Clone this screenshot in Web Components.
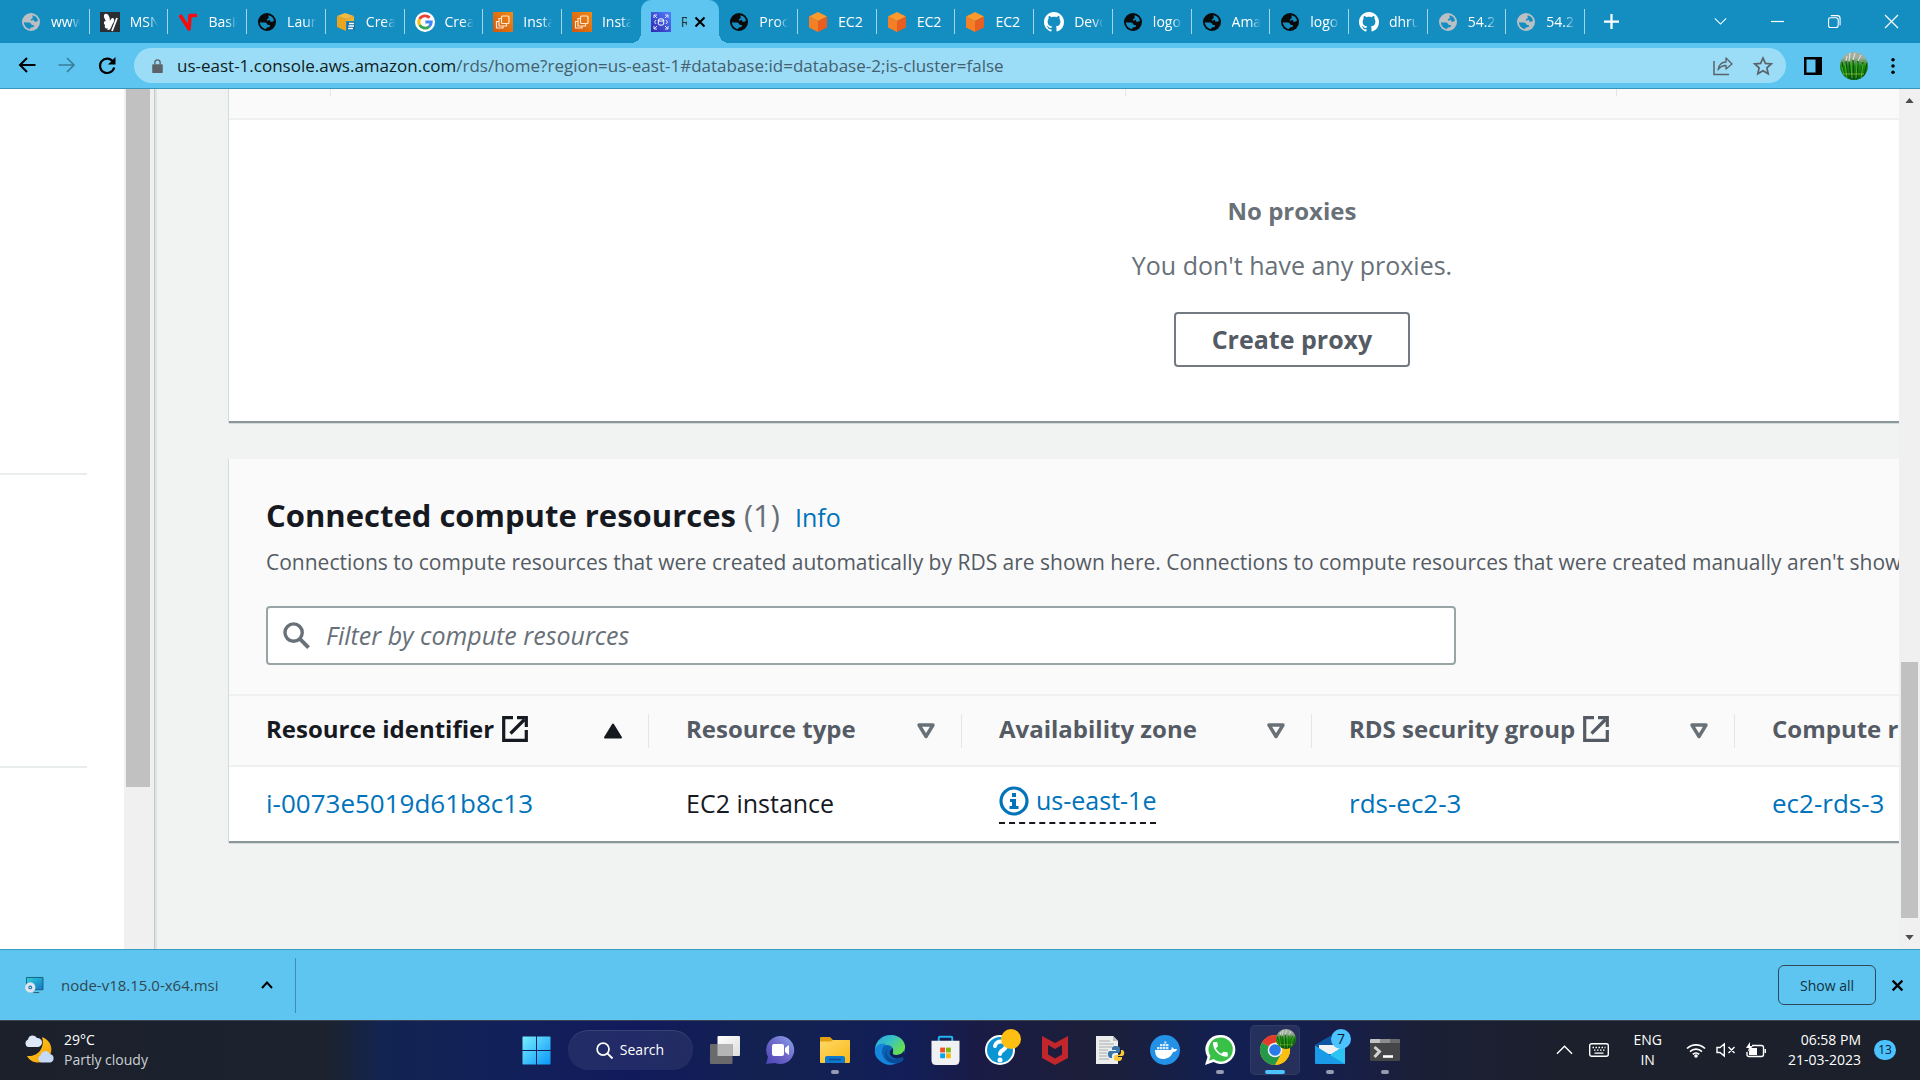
<!DOCTYPE html>
<html lang="en">
<head>
<meta charset="utf-8">
<title>RDS Management Console</title>
<style>
html,body{margin:0;height:100%;overflow:hidden}
body{font-family:"Open Sans","Noto Sans",sans-serif;background:#f1f3f3}
</style>
</head>
<body>
<desktop-shell></desktop-shell>
<script>
const define = (name, css, html) => {
  const t = document.createElement('template');
  t.innerHTML = `<style>*{box-sizing:border-box}button{font:inherit;color:inherit;background:none;border:0;padding:0;margin:0}a{text-decoration:none}${css}</style>${html}`;
  customElements.define(name, class extends HTMLElement {
    constructor() {
      super();
      this.attachShadow({mode: 'open'}).append(t.content.cloneNode(true));
    }
  });
};

const GITHUB = 'M8 0C3.580 0 0 3.580 0 8c0 3.540 2.290 6.530 5.470 7.590.4.070.55-.17.55-.38 0-.19-.01-.82-.01-1.490-2.010.37-2.530-.49-2.690-.94-.09-.23-.48-.94-.82-1.130-.28-.15-.68-.52-.01-.53.63-.01 1.080.58 1.230.82.72 1.210 1.870.87 2.330.66.070-.52.28-.87.51-1.070-1.780-.2-3.640-.89-3.640-3.950 0-.87.31-1.590.82-2.150-.08-.2-.36-1.020.08-2.120 0 0 .67-.21 2.200.82.64-.18 1.320-.27 2-.27s1.360.09 2 .27c1.530-1.040 2.200-.82 2.200-.82.44 1.100.16 1.920.08 2.120.51.56.82 1.270.82 2.150 0 3.070-1.870 3.750-3.650 3.950.29.25.54.73.54 1.480 0 1.070-.01 1.930-.01 2.200 0 .21.15.46.55.38A8.010 8.010 0 0 0 16 8c0-4.420-3.580-8-8-8z';
const PHONE = 'M6.620 10.790c1.440 2.830 3.760 5.140 6.590 6.590l2.200-2.200c.27-.27.67-.36 1.020-.24 1.120.37 2.330.57 3.570.57.55 0 1 .45 1 1V20c0 .55-.45 1-1 1-9.390 0-17-7.610-17-17 0-.55.45-1 1-1h3.500c.55 0 1 .45 1 1 0 1.250.2 2.450.57 3.570.11.35.03.74-.25 1.020l-2.200 2.200z';
const s = (box, body) => `<svg viewBox="0 0 ${box}" aria-hidden="true">${body}</svg>`;
const line = (d, w, extra = '') => `<path d="${d}" fill="none" stroke="currentColor" stroke-width="${w}" ${extra}/>`;

const ICONS = {
  globe: s('20 20', `<circle cx="10" cy="10" r="9" fill="currentColor"/><path fill="#148dc1" d="M11.500 3.200c3 .5 5 2.600 5.500 5.600-1.200.9-2.600 1.400-3.800.7l-.2-1.800-2 .9c-1 .3-1.600-.5-.9-1.300l1.600-1.100zM3 10.300c2 .4 4.600-.3 6 .5 1 .7 1 2 2.200 2.200l2 .3-.7 1.700-2.700.4-.8 1.600C5.600 16.500 3 13.800 3 10.300z"/>`),
  msn: s('20 20', `<path d="M0 0h20v20H0z" fill="#2b2e33"/><path d="M5 2c3-1 5 3 5 7 1-3 3-4 4-2 1 2-1 4-2 6-1 3-2 5-4 5-1 0-1-1 0-2-2 1-4 0-3-3C3 11 4 9 6 9 4 6 3 3 5 2z" fill="#fff"/><path d="m17 6-5 13" stroke="#fff" stroke-width="1.800"/>`),
  vee: s('20 20', `<path d="m2 3 9 14 1-13.500h7" fill="none" stroke="#f90a0c" stroke-width="3.600" stroke-linejoin="round"/>`),
  boxes: s('20 20', `<path d="m1 4 8-3 9 3-8 3z" fill="#f6b940"/><path d="M1 4v11l9 4V7z" fill="#e9a51e"/><path d="m10 7 8-3v5h-8z" fill="#f3ae2c"/><path d="M11 10h8v8h-8z" fill="#1d6fa6"/><path d="M13 11.500h5M12.500 14H18m-6 2.500h5" stroke="#fff" stroke-width="1.500"/>`),
  google: s('48 48', `<circle cx="24" cy="24" r="24" fill="#fff"/><g fill="none" stroke-width="7"><path d="M35 14A15 15 0 0 0 11 17" stroke="#ea4335"/><path d="M11 17a15 15 0 0 0 0 14" stroke="#fbbc05"/><path d="M11 31a15 15 0 0 0 23 4" stroke="#34a853"/><path d="M34 35a15 15 0 0 0 5-11H25" stroke="#4285f4"/></g>`),
  instance: s('20 20', `<defs><linearGradient id="g" x1="0" y1="1" x2="1" y2="0"><stop stop-color="#d0570e"/><stop offset="1" stop-color="#f08a16"/></linearGradient></defs><path d="M0 0h20v20H0z" fill="url(#g)"/><rect x="8.500" y="4" width="7.500" height="7.500" rx="1" fill="none" stroke="#ffe8cf" stroke-width="1.200"/><path d="M8.500 6.500H6v7.500h7.500v-2.500M6 9.500H3.500V16H10v-2" fill="none" stroke="#ffe8cf" stroke-width="1.200"/>`),
  rds: s('20 20', `<defs><linearGradient id="g" x1="0" y1="1" x2="1" y2="0"><stop stop-color="#2e27ad"/><stop offset="1" stop-color="#527fff"/></linearGradient></defs><path d="M0 0h20v20H0z" fill="url(#g)"/><path d="M3 6V3h3M14 3h3v3M17 14v3h-3M6 17H3v-3M3 3l3 3M17 3l-3 3M17 17l-3-3M3 17l3-3M5 8l-1.500 2L5 12M15 8l1.500 2-1.500 2" fill="none" stroke="#dfe3ff"/><ellipse cx="10" cy="8" rx="2.700" ry="1.200" fill="none" stroke="#fff"/><path d="M7.300 8v4c0 1.600 5.400 1.600 5.400 0V8" fill="none" stroke="#fff"/>`),
  cube: s('20 20', `<path d="m10 0 9 4.500-9 4.500-9-4.500z" fill="#fd9a2b"/><path d="M1 4.500 10 9v11l-9-4.500z" fill="#f47f24"/><path d="M19 4.500 10 9v11l9-4.500z" fill="#e85e20"/>`),
  github: s('16 16', `<path fill="#fff" d="${GITHUB}"/>`),
  x: s('12 12', line('m1.500 1.500 9 9m0-9-9 9', 2)),
  thinx: s('14 14', line('m0 0 14 14M14 0 0 14', 1.300)),
  plus: s('16 16', line('M8 0v16M0 8h16', 2.400)),
  down: s('14 8', line('m.5.5 6.500 6.500L13.500.5', 1.200)),
  min: s('14 14', line('M0 7h14', 1.300)),
  restore: s('14 14', line('M2.500 3h6q2.500 0 2.500 2.500V11q0 2.500-2.500 2.500h-6Q.6 13.500.6 11V5q0-2 1.900-2z', 1.200) + line('M3 .7h7q3 0 3 3V11', 1.200)),
  back: s('18 16', line('M17.500 8H2m7-7L2 8l7 7', 2)),
  forward: s('18 16', line('M.5 8H16M9 1l7 7-7 7', 1.600)),
  reload: s('18 18', line('M15 4.500A7.200 7.200 0 1 0 16.200 10.500', 2.200) + '<path d="M17.500 0v7.500H10z" fill="currentColor"/>'),
  lock: s('12 16', `<path d="M1 6h10q1 0 1 1v8q0 1-1 1H1q-1 0-1-1V7q0-1 1-1z" fill="currentColor"/>${line('M3 6V4a3 3 0 0 1 6 0v2', 1.500)}`),
  share: s('20 20', line('M1 5v13.500h15', 1.500) + line('M5 14c1-6 4-8 8-8V2l6 6-6 5V9.500c-4 0-6 1-8 4.500z', 1.300, 'stroke-linejoin="round"')),
  star: s('20 20', line('m10 2 2.400 5.400 5.900.6-4.400 3.900 1.300 5.800L10 14.700l-5.200 3 1.300-5.800L1.700 8l5.900-.6z', 1.700)),
  panel: s('18 18', '<path d="M0 0h18v18H0zm2.500 2.500v13h9v-13z" fill="currentColor" fill-rule="evenodd"/>'),
  dots: s('4 18', '<circle cx="2" cy="2" r="2"/><circle cx="2" cy="9" r="2"/><circle cx="2" cy="16" r="2"/>'),
  avatar: s('28 28', `<defs><clipPath id="c"><circle cx="14" cy="14" r="14"/></clipPath><linearGradient id="g" x1="0" y1="0" x2="0" y2="1"><stop offset=".2" stop-color="#a3ada0"/><stop offset=".5" stop-color="#1c8a15"/><stop offset="1" stop-color="#0d5c0a"/></linearGradient></defs><g clip-path="url(#c)"><path d="M0 0h28v28H0z" fill="url(#g)"/><path d="M5 28 2 10m6 18L6 9m5 19L9 10m5 18L13 8m4 20L18 9m2 19 3-18m0 18 4-17" stroke="#0b4d0a"/><path d="m7 26-2-14m7 14-1-16m5 16 1-15m4 15 2-14M4 24l-2-9" stroke="#43b427"/><path d="M4 22h20" stroke="#b9d84a" opacity=".6"/><path d="m9 9 1-8m3 7 2-7m3 8 3-6M6 9l1-5" stroke="#e6eae3"/></g>`),
  search: s('28 28', line('m17.500 17.500 9 9', 4) + '<circle cx="11" cy="11" r="9" fill="none" stroke="currentColor" stroke-width="3.500"/>'),
  thinsearch: s('18 18', line('m11.500 11.500 6 6', 2) + '<circle cx="7.500" cy="7.500" r="6.300" fill="none" stroke="currentColor" stroke-width="1.800"/>'),
  external: s('26 26', line('M11 1.700H1.700v22.600h22.600V14', 3.200) + line('m8.500 17.500 14-14', 3.200) + line('M15 1.700h9.300V11', 3.200)),
  asc: s('18 16', '<path d="M9 1.500 17 14.500H1z" fill="currentColor" stroke="currentColor" stroke-width="2" stroke-linejoin="round"/>'),
  desc: s('18 16', '<path d="M9 13.500 2 2h14z" fill="none" stroke="currentColor" stroke-width="3.400" stroke-linejoin="round"/>'),
  info: s('30 30', '<circle cx="15" cy="15" r="13" fill="none" stroke="currentColor" stroke-width="3.200"/><path d="M13 7h4v4h-4zM11 13h6v7h2.500v3h-9v-3H13v-4h-2z" fill="currentColor"/>'),
  msi: s('20 18', `<defs><linearGradient id="g" x1="0" y1="0" x2="1" y2="1"><stop stop-color="#2bd3d6"/><stop offset="1" stop-color="#1673c8"/></linearGradient></defs><path d="M1.500.5h17.500v13H1.500z" fill="url(#g)" stroke="#17607c"/><path d="M9 16.500h6" stroke="#35525e"/><circle cx="5.500" cy="11" r="5.500" fill="#dfe5ea"/><circle cx="5.500" cy="11" r="2" fill="#1a76b8"/><circle cx="5.500" cy="11" r=".8" fill="#fff"/>`),
  up: s('12 8', line('M1 7l5-5.500L11 7', 2)),
  thinup: s('18 10', line('m1 9 8-8 8 8', 1.500)),
  weather: s('30 30', `<defs><linearGradient id="g" x1="0" y1="0" x2="1" y2="1"><stop stop-color="#ffd21f"/><stop offset="1" stop-color="#f79a08"/></linearGradient></defs><path d="M18 2c9 3 12 13 7 20-5 7-17 8-22-1 12 1 18-9 15-19z" fill="url(#g)"/><g fill="#dce8f8"><path d="M4 12a4 4 0 0 1 0-7.500A4.800 4.800 0 0 1 13 3a4.500 4.500 0 0 1 1 9z"/><path d="M17 27.500a3.800 3.800 0 0 1-.4-7.200 4.800 4.800 0 0 1 9.200-1.200 4.300 4.300 0 0 1 .7 8.400z" fill="#c6daf5"/></g>`),
  start: s('30 30', `<defs><linearGradient id="g" x1="0" y1="0" x2="1" y2="1" ><stop stop-color="#78eefe"/><stop offset="1" stop-color="#0a96f8"/></linearGradient></defs><path d="M1 .5h13.500v14H.5V1zM15.500.5H29l.5.5v13.500h-14zM.5 15.500h14v14H1l-.5-.5zM15.500 15.500h14V29l-.5.5H15.500z" fill="url(#g)"/>`),
  taskview: s('30 28', `<defs><linearGradient id="g" x1="0" y1="0" x2="1" y2="1"><stop stop-color="#fff"/><stop offset="1" stop-color="#ddd"/></linearGradient></defs><rect x="7.500" width="22.500" height="20" rx="1" fill="url(#g)"/><rect y="8" width="22.500" height="20" rx="1" fill="#6a6a6c"/><path d="M7.500 8h15v12h-15z" fill="#b5b5b6"/>`),
  meet: s('30 30', `<defs><linearGradient id="g" x1="0" y1="1" x2="1" y2="0"><stop stop-color="#4b45b4"/><stop offset=".5" stop-color="#6f67c9"/><stop offset="1" stop-color="#8aa5ec"/></linearGradient></defs><path d="M15 1a14 14 0 1 1-5 27l-9 1 2-7A14 14 0 0 1 15 1z" fill="url(#g)"/><rect x="7" y="9" width="12" height="12" rx="2" fill="#fff"/><path d="m20 13 4-3v10l-4-3z" fill="#fff"/>`),
  folder: s('30 28', `<defs><linearGradient id="g" x1="0" y1="0" x2="1" y2="1"><stop stop-color="#ffd866"/><stop offset="1" stop-color="#f9b817"/></linearGradient></defs><path d="M0 2q0-1 1-1h9l3 3h16q1 0 1 1v4H0z" fill="#e0a011"/><path d="M0 5.500h11l2-1.500h16q1 0 1 1v21q0 1-1 1H1q-1 0-1-1z" fill="url(#g)"/><path d="M5 27v-5q0-2 2-2h16q2 0 2 2v5z" fill="#0f78cf"/><path d="M9 23.500h12" stroke="#0a4f93" stroke-width="1.500"/>`),
  edge: s('30 30', `<defs><linearGradient id="g" x1="0" y1="0" x2="1" y2=".6"><stop stop-color="#2aa3e6"/><stop offset=".5" stop-color="#37c2c4"/><stop offset="1" stop-color="#6be04a"/></linearGradient></defs><circle cx="15" cy="15" r="15" fill="#0b63b5"/><path d="M0 14C1 5 8 0 16 0c9 0 15 7 14 13-1 5-5 7-9 7-3 0-4-1-3-3 1-4-2-7-6-7-6 0-12 5-12 9z" fill="url(#g)"/><path d="M0 14c2-5 7-6 11-5-5 3-5 10-2 14 3 5 9 6 13 5-4 2-10 3-15-1C2 24-1 20 0 14z" fill="#1487dc"/><path d="M13 14c-4 6 2 13 14 9l2 1c-1 2-3 3-5 4-7 2-14-3-14-8 0-3 1-5 3-6z" fill="#0a4c99"/><path d="M18 17c-1 2 0 3 3 3s6-1 8-4l2 7-3-1c-8 4-15-1-13-6l3-3z" fill="#121f56"/>`),
  store: s('30 30', `<path d="M8 6V2q0-1.300 1.300-1.300h11.400Q22 .7 22 2v4" fill="none" stroke="#22b4ee" stroke-width="2"/><path d="M.5 5h29v20q0 5-5 5h-19q-5 0-5-5z" fill="#f0f1f2"/><path d="M9.500 12h5v5h-5z" fill="#f04e23"/><path d="M15.500 12h5v5h-5z" fill="#7fb90b"/><path d="M9.500 18h5v5h-5z" fill="#04a4ee"/><path d="M15.500 18h5v5h-5z" fill="#fdb80c"/>`),
  help: s('30 30', `<circle cx="15" cy="15" r="14" fill="#0c95d3" stroke="#fff" stroke-width="2"/><path d="M10 11c1-6 11-6 11 0 0 4-6 4-6 8" fill="none" stroke="#fff" stroke-width="4" stroke-linecap="round"/><circle cx="15" cy="25" r="2.500" fill="#fff"/>`),
  mcafee: s('28 30', `<path d="M1 1 14 8l13-7v22l-13 7L1 23z" fill="#c2262d"/><path d="M7 10v9.500l7 4 7-4V10l-7 4z" fill="#1c1d3c"/>`),
  python: s('28 28', `<path d="M0 0h17l5 5v23H0z" fill="#eceded"/><path d="M17 0v5h5" fill="#bbb"/><path d="M3 5h11M3 8h15M3 11h13M3 14h9M3 17h8M3 20h8M3 23h10" stroke="#a8aaad"/><path d="M20 10c-4 0-4 1-4 4h4v1h-6c-3 0-3 7 1 7h1v-2q0-3 3-3h3q2 0 2-2v-2c0-2-1-3-4-3z" fill="#3a76a8"/><path d="M22 25c4 0 4-2 4-4h-4v-1h4c3 0 3-6 0-6h-1v2q0 3-3 3h-2q-2 0-2 2v2c0 1 1 2 4 2z" fill="#fcca36"/>`),
  docker: s('30 30', `<circle cx="15" cy="15" r="15" fill="#2391e6"/><path d="M5 15h16c1-1 0-2 1-3l2 2h3c0 2-2 3-4 3-2 5-6 7-10 7-5 0-8-3-8-9z" fill="#fff"/><path d="M7 12h2.500v2.300H7zm3 0h2.500v2.300H10zm3 0h2.500v2.300H13zm3 0h2.500v2.300H16zm-6-3h2.500v2.300H10zm3 0h2.500v2.300H13zm3 0h2.500v2.300H16z" fill="#d9ecfb"/><path d="M14.300 6.500h2v2h-2z" fill="#d9ecfb"/>`),
  whatsapp: s('30 30', `<path d="M15.500 0a14.500 14.500 0 1 1-7 27L0 30l2.500-8A14.500 14.500 0 0 1 15.500 0z" fill="#fff"/><path d="M15.500 2.500a12 12 0 1 1-7 21.500l-4.500 1.700 1.500-4.700A12 12 0 0 1 15.500 2.500z" fill="#38c047"/><path transform="translate(5.500 4.500) scale(.82)" fill="#fff" d="${PHONE}"/>`),
  chrome: s('30 30', `<circle cx="15" cy="15" r="15" fill="#fbbf12"/><path d="M15 15 2 7.500A15 15 0 0 1 28 7.500H15z" fill="#e23b2e"/><path d="M2 7.500A15 15 0 0 0 15 30l6.500-11.300L15 15z" fill="#25984a"/><path d="M28 7.500H15V15l6.500 3.700L15 30A15 15 0 0 0 28 7.500z" fill="#fbbf12"/><circle cx="15" cy="15" r="7.300" fill="#f1f3f4"/><circle cx="15" cy="15" r="5.800" fill="#2b7ae9"/>`),
  mail: s('30 28', `<path d="M0 9 15 0l15 9v18H0z" fill="#0c55a5"/><path d="M4 9h22v9H4z" fill="#eef2f5"/><path d="M0 9.500 15 19l15-9.500V27q0 1-1 1H1q-1 0-1-1z" fill="#1a9be8"/><path d="M30 9.500V28L15 19z" fill="#2cc4f2"/>`),
  terminal: s('30 22', `<rect width="30" height="22" rx="1.500" fill="#454648"/><path d="M0 1q0-1 1-1h9v4H0z" fill="#c3c3c5"/><path d="M10 0h10v4H10z" fill="#8d8d90"/><path d="M20 0h9q1 0 1 1v3H20z" fill="#6a6a6d"/><path d="m4.500 8 5 4.500-5 5.500" fill="none" stroke="#d2d2d3" stroke-width="3"/><path d="M13 17.500h10" stroke="#fff" stroke-width="2.600"/>`),
  keyboard: s('20 14', `<rect x=".7" y=".7" width="18.600" height="12.600" rx="2" fill="none" stroke="currentColor" stroke-width="1.400"/><path d="M3.500 4.500h1.500m1.500 0H8m1.500 0H11m1.500 0H14m1.500 0h1M5 7.200h1.500m1.500 0h1.500m1.500 0h1.500M14 7.200h1.500M5.500 10.200h9" stroke="currentColor" stroke-width="1.300"/>`),
  wifi: s('20 15', line('M1 5.500a13 13 0 0 1 18 0M4 8.600a8.600 8.600 0 0 1 12 0M6.800 11.400a4.600 4.600 0 0 1 6.400 0', 1.600) + '<circle cx="10" cy="13" r="1.800" fill="currentColor"/>'),
  mute: s('20 14', line('M1 4.500h3L8.300 1v12L4 9.500H1zM12.500 4l6 6m0-6-6 6', 1.400)),
  battery: s('20 16', line('M6 3.500h9.500q2 0 2 2v7q0 2-2 2H3q-2 0-2-2V10', 1.400) + '<path d="M18.500 7h1.500v4h-1.500zM5 6h6v7H3V9zM4 0 0 6h3L1.500 10 7 4H4z" fill="currentColor"/>'),
  tri: s('10 6', '<path d="M5 0 10 6H0z" fill="#4d4d4d"/>'),
  trid: s('10 6', '<path d="M5 6 10 0H0z" fill="#4d4d4d"/>')
};

customElements.define('ui-icon', class extends HTMLElement {
  constructor() { super(); this.attachShadow({mode: 'open'}); }
  connectedCallback() {
    this.shadowRoot.innerHTML = `<style>:host{display:inline-block;flex:none;width:var(--w,20px);height:var(--h,var(--w,20px))}svg{display:block;width:100%;height:100%;overflow:visible}</style>${ICONS[this.getAttribute('name')]}`;
  }
});
const ic = (name, w, h = w, extra = '') => `<ui-icon name="${name}" style="--w:${w}px;--h:${h}px;${extra}"></ui-icon>`;

define('browser-tab', `
:host{display:flex;flex:1 1 0;min-width:0;height:43px;align-items:center}
button{display:flex;align-items:center;gap:10px;width:100%;height:25px;padding:0 7px 0 10px;border-right:1px solid #a5d5ea;color:#fff;text-align:left}
.t{flex:1;min-width:0;overflow:hidden;white-space:nowrap;font-size:14px;line-height:20px;-webkit-mask-image:linear-gradient(90deg,#000 60%,transparent 95%)}
:host([whole]) .t{-webkit-mask-image:none}
:host([active]){background:#5ec5f0;border-radius:10px 10px 0 0;position:relative}
:host([active])::before,:host([active])::after{content:"";position:absolute;bottom:0;width:10px;height:10px}
:host([active])::before{right:100%;background:radial-gradient(circle at 0 0,transparent 10px,#5ec5f0 10px)}
:host([active])::after{left:100%;background:radial-gradient(circle at 100% 0,transparent 10px,#5ec5f0 10px)}
:host([active]) button,:host([last-before]) button{border-color:transparent}
:host([active]) button{color:#17333f;padding-right:13px}
:host([active]) .t{-webkit-mask-image:none;flex:0 0 6px;margin-right:-3px}
`, `<button role="tab"><slot name="icon"></slot><span class="t"><slot></slot></span><slot name="close"></slot></button>`);

const tab = (icon, text, attr = '', color = '#0a0a0a') => `<browser-tab ${attr}><ui-icon slot="icon" name="${icon}" style="color:${color}"></ui-icon>${text}${attr === 'active' ? '<ui-icon slot="close" name="x" style="--w:12px;color:#000"></ui-icon>' : ''}</browser-tab>`;

define('tab-strip', `
:host{display:flex;height:43px;background:#148dc1;color:#fff;padding-left:11px;align-items:center}
.tabs{display:flex;flex:0 1 1574px;min-width:0}
.new{margin-left:19px;display:flex}
.win{margin-left:auto;display:flex;height:36px}
.win button{width:57px;display:flex;align-items:center;justify-content:center}
`, `<div class="tabs" role="tablist">
${tab('globe', 'www', '', '#b9bfc3')}${tab('msn', 'MSN')}${tab('vee', 'Basic')}${tab('globe', 'Laun')}${tab('boxes', 'Crea')}${tab('google', 'Crea')}${tab('instance', 'Insta')}${tab('instance', 'Insta', 'last-before')}${tab('rds', 'R', 'active')}${tab('globe', 'Proc')}${tab('cube', 'EC2', 'whole')}${tab('cube', 'EC2', 'whole')}${tab('cube', 'EC2', 'whole')}${tab('github', 'Devo')}${tab('globe', 'logo')}${tab('globe', 'Ama')}${tab('globe', 'logo')}${tab('github', 'dhru')}${tab('globe', '54.2', '', '#b9bfc3')}${tab('globe', '54.2', '', '#b9bfc3')}
</div><button class="new" aria-label="New tab">${ic('plus', 15)}</button>
<div class="win"><button aria-label="Search tabs">${ic('down', 13, 7)}</button><button aria-label="Minimize">${ic('min', 13)}</button><button aria-label="Restore">${ic('restore', 13)}</button><button aria-label="Close">${ic('thinx', 13)}</button></div>`);

define('tool-bar', `
:host{display:flex;align-items:center;height:46px;background:#5ec5f0;border-bottom:1px solid #3595bd;padding:0 25px 0 18px}
button{display:flex}
.nav{display:flex;gap:22px;margin-right:18px}
.omni{flex:1;min-width:0;display:flex;align-items:center;height:35px;border-radius:18px;background:#9bdcf7;padding:0 13px 0 18px;margin-right:18px;color:#5b6268}
.url{flex:1;min-width:0;margin-left:14px;font-size:17px;line-height:24px;white-space:nowrap;color:#43606d;outline:0}
.url b{font-weight:400;color:#0f1c22}
.acts{display:flex;gap:20px}
.right{display:flex;align-items:center;gap:18px}
`, `<div class="nav"><button aria-label="Back">${ic('back', 18, 16)}</button><button aria-label="Forward" style="color:#3a7c98">${ic('forward', 18, 16)}</button><button aria-label="Reload">${ic('reload', 18)}</button></div>
<div class="omni">${ic('lock', 11, 14)}<div class="url" role="textbox" aria-label="Address"><b>us-east-1.console.aws.amazon.com</b>/rds/home?region=us-east-1#database:id=database-2;is-cluster=false</div><div class="acts"><button aria-label="Share">${ic('share', 20)}</button><button aria-label="Bookmark">${ic('star', 20)}</button></div></div>
<div class="right"><button aria-label="Side panel">${ic('panel', 18)}</button><button aria-label="Profile">${ic('avatar', 28)}</button><button aria-label="Menu" style="padding-left:5px">${ic('dots', 4, 16)}</button></div>`);

define('side-pane', `
:host{display:flex;flex:none;width:157px;background:#fff;border-right:2px solid #dfe3e3}
.nav{flex:1;padding:384px 37px 0 0}
hr{border:0;height:2px;background:#eaeded;margin:0 0 291px}
.bar{width:31px;background:#f0f0f0;padding:0 4px 0 2px;border-right:1px solid #c3c8c8}
.thumb{height:698px;background:#c1c1c1}
`, `<nav class="nav"><hr><hr></nav><div class="bar"><div class="thumb"></div></div>`);

define('page-scroll', `
:host{display:flex;flex:none;flex-direction:column;align-items:center;width:21px;background:#f0f0f0;padding:9px 0}
.track{flex:1;width:17px;display:flex;flex-direction:column;justify-content:flex-end;padding:0 0 17px}
.thumb{height:256px;background:#c1c1c1}
`, `${ic('tri', 9, 5)}<div class="track"><div class="thumb"></div></div>${ic('trid', 9, 5)}`);

define('aws-card', `
:host{display:block;width:2126px;background:#fff;border-bottom:2px solid #8a9899;box-shadow:-1px 0 #d5dbdb,0 1px #d5dbdb}
.head{background:#fafafa}
`, `<div class="head"><slot name="head"></slot></div><slot></slot>`);

define('proxies-panel', `
:host{display:block}
.cols{display:grid;grid-template-columns:102px 795px 491px 1fr;height:31px;border-bottom:2px solid #eff0f0}
.cols i{height:7px;border-right:1px solid #e4e7e7}
.cols i:last-child{border:0}
.empty{padding:76px 0 54px;display:flex;flex-direction:column;align-items:center;color:#687078;font-size:24px;line-height:30px}
p{margin:24px 0 32px;font-size:25px}
button{height:55px;width:236px;padding-bottom:2px;border:2px solid #747a82;border-radius:4px;color:#545b64;font-weight:700;font-size:25px}
`, `<aws-card><div slot="head" class="cols"><i></i><i></i><i></i><i></i></div><div class="empty"><strong>No proxies</strong><p>You don't have any proxies.</p><button>Create proxy</button></div></aws-card>`);

define('column-head', `
:host{display:flex;align-items:center;justify-content:space-between;height:34px;padding:0 26px 0 37px;border-right:1px solid #e4e7e7;color:#545b64;font-size:24px;line-height:32px;white-space:nowrap;--sort:#687078}
:host([sorted]){color:#16191f;--sort:#16191f}
button{display:flex;align-items:center;gap:8px;font-weight:700}
.l{padding-bottom:3px}
.s{display:flex;color:var(--sort)}
`, `<button class="l"><slot></slot></button><button class="s" aria-label="Sort"><slot name="sort"></slot></button>`);

const head = (label, ext, sorted) => `<th scope="col"><column-head ${sorted ? 'sorted' : ''}>${label}${ext ? ic('external', 26) : ''}<ui-icon slot="sort" name="${sorted ? 'asc' : 'desc'}" style="--w:18px;--h:16px"></ui-icon></column-head></th>`;

define('resources-panel', `
:host{display:block;margin-top:36px}
header{padding:39px 37px 29px}
h2{margin:0;display:flex;align-items:baseline;height:36px;font-size:31px;line-height:34px;color:#16191f;white-space:nowrap}
h2 span{font-weight:400;color:#687078;margin-left:8px}
h2 a{font-size:25px;font-weight:400;margin-left:15px}
a{color:#0073bb}
p{margin:15px 0 31px;font-size:21px;line-height:26px;color:#545b64;white-space:nowrap}
label{display:flex;align-items:center;width:1190px;height:59px;background:#fff;border:2px solid #98a4a5;border-radius:4px;padding:0 15px;color:#687078}
input{flex:1;min-width:0;margin-left:16px;padding:0 0 2px;border:0;outline:0;background:none;font:italic 25px/32px "Open Sans","Noto Sans",sans-serif;color:#16191f}
input::placeholder{color:#687078;opacity:1}
table{width:100%;table-layout:fixed;border-collapse:collapse;font-size:25px;line-height:32px;color:#16191f}
th{padding:0;height:71px;background:#fafafa;border:solid #eff0f0;border-width:2px 0}
td{height:75px;padding:0 0 2px 37px}
td a{font-size:26px}
td .az{display:inline-flex;align-items:flex-end;gap:7px;height:42px;border-bottom:2px dashed #16191f;padding-bottom:6px;font-size:25px}
`, `<aws-card><header slot="head"><h2>Connected compute resources<span>(1)</span><a href="#info">Info</a></h2>
<p>Connections to compute resources that were created automatically by RDS are shown here. Connections to compute resources that were created manually aren't shown here.</p>
<label>${ic('search', 27)}<input type="search" placeholder="Filter by compute resources" aria-label="Filter by compute resources"></label></header>
<table><colgroup><col style="width:420px"><col style="width:313px"><col style="width:350px"><col style="width:423px"><col></colgroup>
<thead><tr>${head('Resource identifier', 1, 1)}${head('Resource type')}${head('Availability zone')}${head('RDS security group', 1)}${head('Compute resource security group')}</tr></thead>
<tbody><tr><td><a href="#i">i-0073e5019d61b8c13</a></td><td>EC2 instance</td><td><a class="az" href="#az">${ic('info', 30)}us-east-1e</a></td><td><a href="#sg">rds-ec2-3</a></td><td><a href="#csg">ec2-rds-3</a></td></tr></tbody></table></aws-card>`);

define('page-view', `
:host{display:flex;flex:1;min-height:0;overflow:hidden;background:#f1f3f3}
main{flex:1;min-width:0;overflow:hidden;padding-left:72px}
`, `<side-pane></side-pane><main><proxies-panel></proxies-panel><resources-panel></resources-panel></main><page-scroll></page-scroll>`);

define('download-shelf', `
:host{display:flex;align-items:center;height:71px;background:#5ec5f0;border-top:1px solid #3a9cc4;padding:0 16px 0 25px}
button{display:flex;align-items:center}
.item{height:55px;width:271px;border-right:1px solid #3a8fb3;font-size:15px;color:#2f4853;justify-content:space-between;padding-right:22px}
.f{display:flex;align-items:center;gap:17px}
.all{margin-left:auto;width:98px;height:40px;justify-content:center;border:1px solid #2f4a57;border-radius:6px;font-size:14px;color:#13303c;margin-right:15px}
`, `<button class="item"><span class="f">${ic('msi', 19, 17)}node-v18.15.0-x64.msi</span>${ic('up', 12, 8, 'color:#000')}</button><button class="all">Show all</button><button aria-label="Close shelf">${ic('x', 13)}</button>`);

define('task-icon', `
:host{display:flex;width:55px;height:60px;align-items:center;justify-content:center}
button{position:relative;width:50px;height:50px;display:flex;align-items:center;justify-content:center;border-radius:5px}
:host([current]) button{background:#ffffff14;box-shadow:inset 0 0 0 1px #ffffff0f}
:host([open]) button::after{content:"";position:absolute;bottom:1px;width:8px;height:4px;border-radius:2px;background:#979bb0}
:host([current]) button::after{width:20px;background:#4cc2ff}
::slotted(.badge){position:absolute;top:4px;right:4px;width:20px;height:20px;border-radius:10px;font-size:14px;line-height:20px;color:#0b1d2b;text-align:center}
`, `<button><slot></slot></button>`);

const task = (icon, w, h, attr = '', badge = '') => `<task-icon ${attr}>${ic(icon, w, h)}${badge}</task-icon>`;

define('task-bar', `
:host{display:grid;grid-template-columns:1fr auto 1fr;height:60px;box-shadow:inset 0 1px #3d4555;color:#fff;font-size:14px;line-height:20px;background:linear-gradient(90deg,#1b202b 0,#1c232e 17%,#122452 20%,#12205a 27%,#121a5c 33%,#122250 40%,#121e58 47%,#191b45 51%,#1c1f38 57%,#121f52 64%,#171f48 70%,#1b1f36 74%,#1b202c 82%,#1c202b 100%)}
button{display:flex}
.left{display:flex;align-items:center;padding-left:24px;gap:10px}
.left span{color:#cdd0d4}.left b{font-weight:400;color:#fff;display:block}
.mid{display:flex;align-items:center;padding-left:1px}
.search{width:125px;height:40px;border-radius:20px;background:#ffffff12;box-shadow:inset 0 1px #ffffff1a;margin:0 5px 0 4px;align-items:center;justify-content:center;gap:7px}
.right{display:flex;align-items:center;justify-content:flex-end;padding-right:24px;white-space:nowrap}
.n{width:22px;height:20px;border-radius:10px;background:#4cc2ff;color:#06202f;font-size:12px;margin-left:13px;justify-content:center}
.lang{text-align:center;margin:0 24px 0 24px}.time{text-align:right;margin-left:22px}
.sys{display:flex;gap:10px;align-items:center}
`, `<div class="left">${ic('weather', 30)}<span><b>29°C</b>Partly cloudy</span></div>
<div class="mid">${task('start', 29, 29)}<button class="search">${ic('thinsearch', 17)}Search</button>${task('taskview', 30, 28)}${task('meet', 30, 30)}${task('folder', 30, 28, 'open')}${task('edge', 30, 30)}${task('store', 29, 29)}${task('help', 30, 30, '', '<span class="badge" style="background:#fdbf12"></span>')}${task('mcafee', 28, 30)}${task('python', 28, 28)}${task('docker', 30, 30)}${task('whatsapp', 30, 30, 'open')}${task('chrome', 30, 30, 'open current', '<ui-icon class="badge" name="avatar"></ui-icon>')}${task('mail', 30, 28, 'open', '<span class="badge" style="background:#4cc2ff">7</span>')}${task('terminal', 30, 22, 'open')}</div>
<div class="right">${ic('thinup', 17, 10, 'margin-right:16px')}${ic('keyboard', 20, 14)}<div class="lang">ENG<br>IN</div><div class="sys">${ic('wifi', 20, 15)}${ic('mute', 20, 14)}${ic('battery', 20, 16)}</div><div class="time">06:58 PM<br>21-03-2023</div><button class="n">13</button></div>`);

define('desktop-shell', `:host{display:flex;flex-direction:column;height:100vh;overflow:hidden}`,
  `<tab-strip></tab-strip><tool-bar></tool-bar><page-view></page-view><download-shelf></download-shelf><task-bar></task-bar>`);
</script>
</body>
</html>
